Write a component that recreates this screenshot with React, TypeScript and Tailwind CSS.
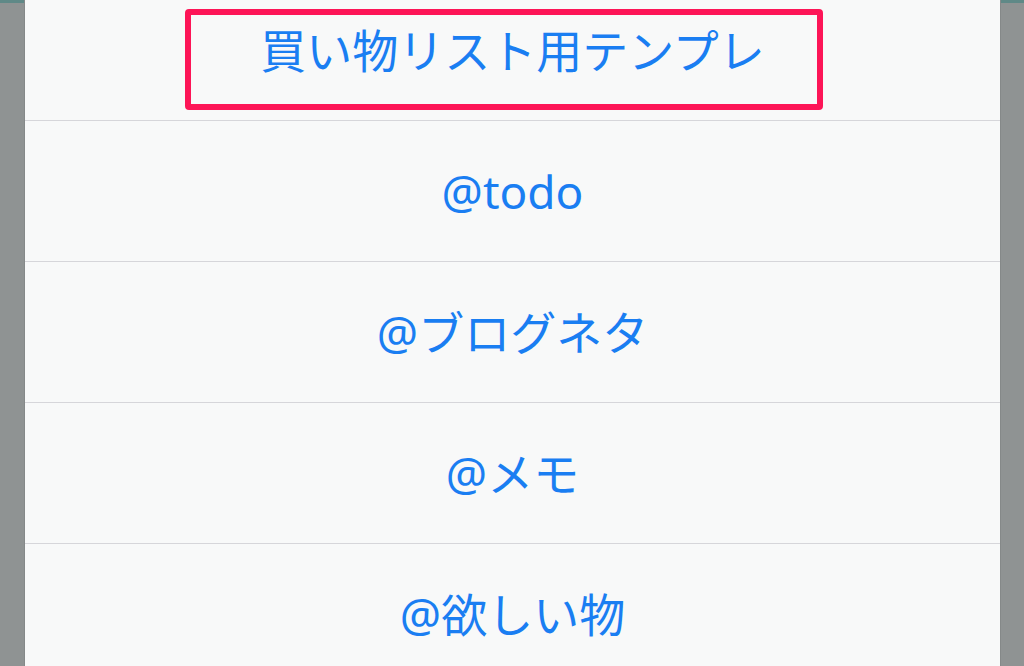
const items = ["買い物リスト用テンプレ", "@todo", "@ブログネタ", "@メモ", "@欲しい物"];

export default function App() {
  return (
    <div
      className="flex h-[666px] w-[1024px] overflow-hidden bg-[#8f9393]"
      style={{ fontFamily: '"Noto Sans", "Noto Sans CJK JP", sans-serif' }}
    >
      <div className="flex w-[25px] flex-col border-r border-[#858989]">
        <div className="h-[3px] bg-[#5f8987]" />
      </div>
      <div className="relative flex-1 bg-[#f8f9f9]">
        <div className="-mt-[20px] flex flex-col">
          {items.map((label, i) => (
            <div
              key={label}
              className={
                "flex h-[141px] items-center justify-center text-[46px] text-[#1a7ef2] " +
                (i < items.length - 1 ? "border-b border-[#d6d6da]" : "")
              }
            >
              {label}
            </div>
          ))}
        </div>
        <div className="absolute left-[160px] top-[9px] h-[101px] w-[638px] rounded-[4px] border-[6px] border-[#fd1557]" />
      </div>
      <div className="flex w-[24px] flex-col border-l border-[#858989]">
        <div className="h-[3px] bg-[#5f8987]" />
      </div>
    </div>
  );
}
